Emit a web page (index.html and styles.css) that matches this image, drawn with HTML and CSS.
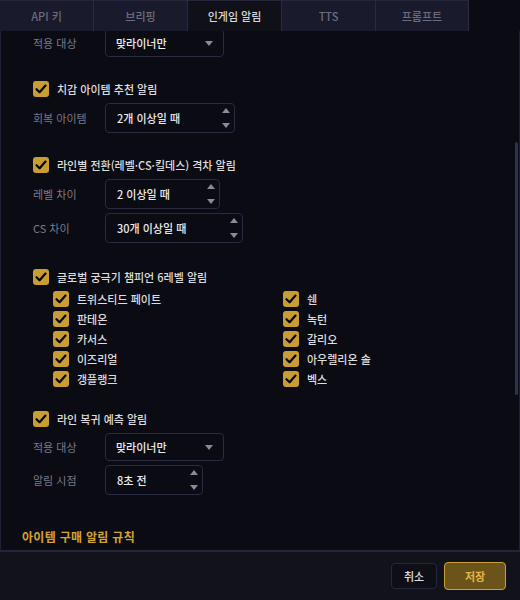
FILE: index.html
```html
<!DOCTYPE html>
<html lang="ko">
<head>
  <meta charset="UTF-8" />
  <meta name="viewport" content="width=device-width, initial-scale=1.0"/>
  <title>인게임 알림 설정</title>
  <link rel="stylesheet" href="styles.css">
</head>
<body>

<div class="app">
  <nav class="tabs">
    <div class="tab">API 키</div>
    <div class="tab">브리핑</div>
    <div class="tab active">인게임 알림</div>
    <div class="tab">TTS</div>
    <div class="tab">프롬프트</div>
  </nav>

  <main class="panel">
    <div class="scroll">
      <div class="field first">
        <span class="label">적용 대상</span>
        <div class="select">맞라이너만<span class="caret"></span></div>
      </div>

      <section class="group">
        <div class="check"><span class="box"></span>치감 아이템 추천 알림</div>
        <div class="field">
          <span class="label">회복 아이템</span>
          <div class="num num-item">2개 이상일 때<span class="spin"><i class="up"></i><i class="down"></i></span></div>
        </div>
      </section>

      <section class="group">
        <div class="check"><span class="box"></span>라인별 전환(레벨·CS·킬데스) 격차 알림</div>
        <div class="field">
          <span class="label">레벨 차이</span>
          <div class="num num-level">2 이상일 때<span class="spin"><i class="up"></i><i class="down"></i></span></div>
        </div>
        <div class="field">
          <span class="label">CS 차이</span>
          <div class="num num-cs">30개 이상일 때<span class="spin"><i class="up"></i><i class="down"></i></span></div>
        </div>
      </section>

      <section class="group ult">
        <div class="check"><span class="box"></span>글로벌 궁극기 챔피언 6레벨 알림</div>
        <div class="champs">
          <div class="check"><span class="box"></span>트위스티드 페이트</div>
          <div class="check"><span class="box"></span>쉔</div>
          <div class="check"><span class="box"></span>판테온</div>
          <div class="check"><span class="box"></span>녹턴</div>
          <div class="check"><span class="box"></span>카서스</div>
          <div class="check"><span class="box"></span>갈리오</div>
          <div class="check"><span class="box"></span>이즈리얼</div>
          <div class="check"><span class="box"></span>아우렐리온 솔</div>
          <div class="check"><span class="box"></span>갱플랭크</div>
          <div class="check"><span class="box"></span>벡스</div>
        </div>
      </section>

      <section class="group last">
        <div class="check"><span class="box"></span>라인 복귀 예측 알림</div>
        <div class="field">
          <span class="label">적용 대상</span>
          <div class="select">맞라이너만<span class="caret"></span></div>
        </div>
        <div class="field">
          <span class="label">알림 시점</span>
          <div class="num num-time">8초 전<span class="spin"><i class="up"></i><i class="down"></i></span></div>
        </div>
      </section>

      <h3 class="section-title">아이템 구매 알림 규칙</h3>
    </div>
    <div class="scrollbar"></div>
  </main>

  <footer class="footer">
    <button class="btn">취소</button>
    <button class="btn primary">저장</button>
  </footer>
</div>

</body>
</html>
```

FILE: styles.css
```css
body {
  margin: 0;
  background: #0b0b14;
  font-family: 'Noto Sans CJK KR', 'Noto Sans', sans-serif;
  color: #dcdcdc;
}

.app {
  display: flex;
  flex-direction: column;
  height: 600px;
  width: 520px;
}

/* tabs */
.tabs {
  display: flex;
  height: 31px;
  flex-shrink: 0;
}

.tab {
  width: 93px;
  display: flex;
  align-items: center;
  justify-content: center;
  background: #191a2c;
  border-top: 1px solid #25263a;
  border-right: 1px solid #2a2b40;
  color: #6c6c7e;
  font-size: 11px;
  font-weight: 500;
}

.tab:last-child {
  width: 92px;
}

.tab.active {
  background: #101018;
  color: #d8d8d8;
}

/* panel */
.panel {
  flex: 1;
  position: relative;
  overflow: hidden;
  border-left: 1px solid #1f1f33;
  border-right: 1px solid #1f1f33;
}

.scroll {
  padding: 0 32px;
}

.scrollbar {
  position: absolute;
  right: 1px;
  top: 111px;
  width: 3px;
  height: 253px;
  border-radius: 2px;
  background: #2f3150;
}

.field {
  display: flex;
  align-items: center;
  margin-top: 4px;
}

.field.first {
  margin-top: -2px;
}

.label {
  width: 72px;
  color: #7a7a88;
  font-size: 11px;
}

.select, .num {
  position: relative;
  box-sizing: border-box;
  display: flex;
  align-items: center;
  border: 1px solid #2a2a40;
  border-radius: 4px;
  background: #0b0b14;
  color: #ececec;
  font-size: 11px;
  font-weight: 500;
}

.select {
  width: 119px;
  height: 28px;
  padding-left: 10px;
}

.caret {
  position: absolute;
  right: 10px;
  top: 11px;
  border-left: 4px solid transparent;
  border-right: 4px solid transparent;
  border-top: 5px solid #8a8a98;
}

.num {
  height: 30px;
  padding-left: 11px;
}

.num-item { width: 130px; }
.num-level { width: 115px; }
.num-cs { width: 138px; }
.num-time { width: 98px; }

.spin {
  position: absolute;
  right: 4px;
  top: 4px;
  bottom: 4px;
  display: flex;
  flex-direction: column;
  justify-content: space-between;
}

.spin i {
  display: block;
  border-left: 4px solid transparent;
  border-right: 4px solid transparent;
}

.spin .up {
  border-bottom: 5px solid #8a8a98;
}

.spin .down {
  border-top: 5px solid #8a8a98;
}

/* checkboxes */
.group {
  margin-top: 22px;
}

.check {
  display: flex;
  align-items: center;
  gap: 8px;
  height: 20px;
  font-size: 11px;
  font-weight: 500;
  color: #dedede;
}

.box {
  width: 16px;
  height: 16px;
  flex-shrink: 0;
  border-radius: 3px;
  background: #c99c34 url("data:image/svg+xml,%3Csvg xmlns='http://www.w3.org/2000/svg' viewBox='0 0 16 16'%3E%3Cpath d='M3.5 8.2 6.6 11.2 12.5 4.6' fill='none' stroke='%23000' stroke-width='2.2' stroke-linecap='round' stroke-linejoin='round'/%3E%3C/svg%3E") center / 16px 16px no-repeat;
}

.group.ult {
  margin-top: 24px;
}

.champs {
  display: grid;
  grid-template-columns: 230px 1fr;
  margin: 2px 0 0 20px;
}

.group.last {
  margin-top: 20px;
}

.section-title {
  margin: 33px 0 0 -11px;
  font-size: 12px;
  font-weight: 700;
  color: #d6a232;
  letter-spacing: 0.3px;
}

/* footer */
.footer {
  flex-shrink: 0;
  height: 48px;
  display: flex;
  align-items: center;
  justify-content: flex-end;
  gap: 7px;
  padding-right: 14px;
  background: #12121a;
  border-top: 2px solid #26243a;
}

.btn {
  font-family: inherit;
  font-size: 11px;
  font-weight: 500;
  height: 26px;
  width: 46px;
  border-radius: 4px;
  border: 1px solid #26263c;
  background: #0e0e16;
  color: #e0e0e0;
}

.btn.primary {
  width: 62px;
  height: 28px;
  background: #6b5319;
  border-color: #c9a03c;
  color: #e6b445;
  font-weight: 700;
}
```
